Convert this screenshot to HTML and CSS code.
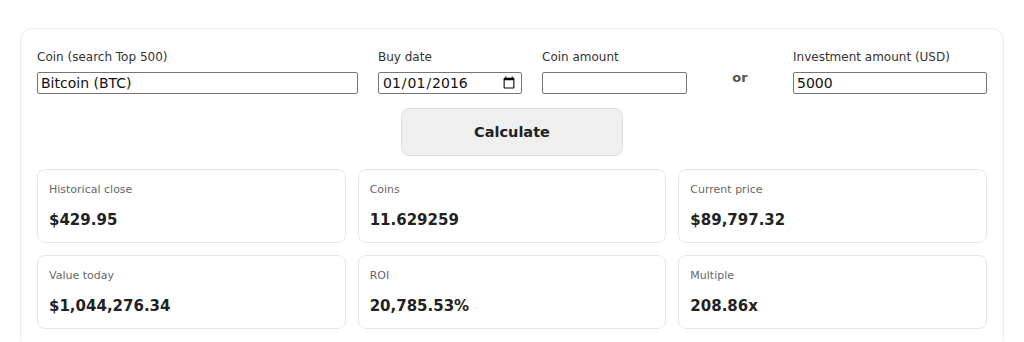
FILE: index.html
```html
<!DOCTYPE html>
<html lang="en">
<head>
    <meta charset="UTF-8">
    <title>Crypto Investment Calculator</title>
    <link rel="stylesheet" href="styles.css">
</head>
<body>
    <div class="panel">
        <div class="fields">
            <div class="field">
                <label for="coin">Coin (search Top 500)</label>
                <input id="coin" type="text" value="Bitcoin (BTC)">
            </div>
            <div class="field">
                <label for="buy-date">Buy date</label>
                <input id="buy-date" type="date" value="2016-01-01">
            </div>
            <div class="field">
                <label for="coin-amount">Coin amount</label>
                <input id="coin-amount" type="text" value="">
            </div>
            <div class="or">or</div>
            <div class="field">
                <label for="investment">Investment amount (USD)</label>
                <input id="investment" type="text" value="5000">
            </div>
        </div>

        <button class="calc-btn" id="calculate">Calculate</button>

        <div class="results">
            <div class="result">
                <div class="result-label">Historical close</div>
                <div class="result-value">$429.95</div>
            </div>
            <div class="result">
                <div class="result-label">Coins</div>
                <div class="result-value">11.629259</div>
            </div>
            <div class="result">
                <div class="result-label">Current price</div>
                <div class="result-value">$89,797.32</div>
            </div>
            <div class="result">
                <div class="result-label">Value today</div>
                <div class="result-value">$1,044,276.34</div>
            </div>
            <div class="result">
                <div class="result-label">ROI</div>
                <div class="result-value">20,785.53%</div>
            </div>
            <div class="result">
                <div class="result-label">Multiple</div>
                <div class="result-value">208.86x</div>
            </div>
        </div>
    </div>
</body>
</html>
```

FILE: styles.css
```css
body {
    margin: 0;
    background-color: #ffffff;
    font-family: 'DejaVu Sans', Verdana, sans-serif;
    color: #222222;
}

.panel {
    margin: 28px 20px 0 20px;
    padding: 21px 16px 20px 16px;
    border: 1px solid #ececec;
    border-radius: 12px;
}

.fields {
    display: grid;
    grid-template-columns: 321px 144px 145px 66px 194px;
    column-gap: 20px;
}

.field {
    display: flex;
    flex-direction: column;
}

label {
    font-size: 12px;
    line-height: 14px;
    color: #333333;
    margin-bottom: 8px;
}

input {
    font-family: 'DejaVu Sans', Verdana, sans-serif;
    font-size: 14px;
    color: #111111;
    height: 22px;
    box-sizing: border-box;
    padding: 0 3px;
    border: 1px solid #767676;
    border-radius: 2px;
    background-color: #ffffff;
}

.or {
    font-size: 13px;
    font-weight: bold;
    color: #555555;
    text-align: center;
    padding-top: 20px;
}

.calc-btn {
    display: block;
    margin: 14px auto 0 auto;
    width: 222px;
    height: 48px;
    font-family: 'DejaVu Sans', Verdana, sans-serif;
    font-size: 14.5px;
    font-weight: bold;
    color: #222222;
    background-color: #efefef;
    border: 1px solid #dddddd;
    border-radius: 8px;
    cursor: pointer;
}

.results {
    display: grid;
    grid-template-columns: repeat(3, 1fr);
    gap: 12px 12px;
    margin-top: 13px;
}

.result {
    height: 74px;
    box-sizing: border-box;
    padding: 13px 11px;
    border: 1px solid #e6e6e6;
    border-radius: 8px;
}

.result-label {
    font-size: 11px;
    line-height: 14px;
    color: #666666;
}

.result-value {
    margin-top: 14px;
    font-size: 15px;
    line-height: 18px;
    font-weight: bold;
    color: #222222;
}
```
